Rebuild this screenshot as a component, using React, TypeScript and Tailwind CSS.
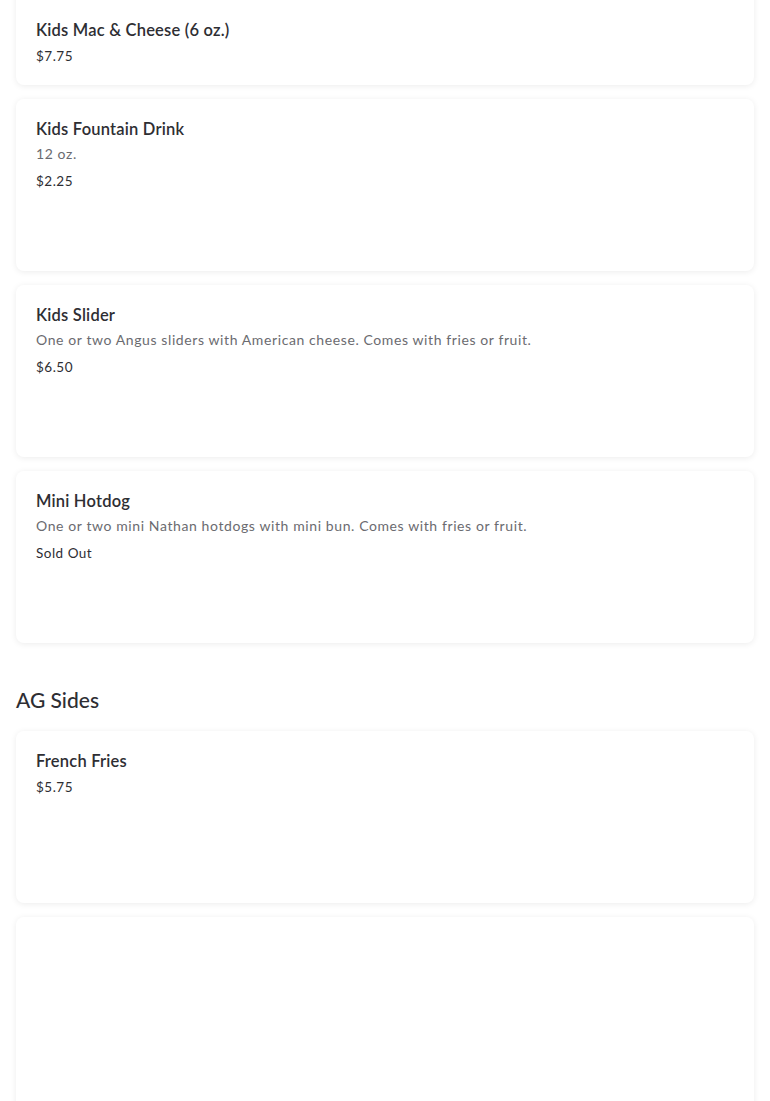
import React from 'react';

interface MenuItem {
    name: string;
    description?: string;
    price: string;
}

const kids: MenuItem[] = [
    { name: 'Kids Mac & Cheese (6 oz.)', price: '$7.75' },
    { name: 'Kids Fountain Drink', description: '12 oz.', price: '$2.25' },
    { name: 'Kids Slider', description: 'One or two Angus sliders with American cheese. Comes with fries or fruit.', price: '$6.50' },
    { name: 'Mini Hotdog', description: 'One or two mini Nathan hotdogs with mini bun. Comes with fries or fruit.', price: 'Sold Out' },
];

const sides: MenuItem[] = [
    { name: 'French Fries', price: '$5.75' },
];

const ItemCard: React.FC<{ item: MenuItem; className?: string }> = ({ item, className = 'min-h-[172px] pt-[18px]' }) => (
    <div className={`bg-white rounded-lg shadow-[0_1px_6px_rgba(0,0,0,0.08)] px-5 ${className}`}>
        <h3 className="text-[16.5px] leading-6 font-semibold text-[#2e2e33] tracking-[0.2px]">{item.name}</h3>
        {item.description && (
            <p className="text-[14px] leading-5 mt-[3px] text-[#6b6b70] tracking-[0.6px]">{item.description}</p>
        )}
        <p className={`text-[13.5px] leading-5 text-[#2e2e33] tracking-[0.5px] ${item.description ? 'mt-[7px]' : 'mt-[4px]'}`}>
            {item.price}
        </p>
    </div>
);

export default function App() {
    return (
        <div className="min-h-screen bg-white overflow-hidden px-4 font-['Lato',_'Liberation_Sans',_sans-serif]">
            <div className="flex flex-col gap-[14px]">
                {kids.map((item, i) => (
                    <ItemCard
                        key={item.name}
                        item={item}
                        className={i === 0 ? 'h-[104px] -mt-[19px] pt-[37px]' : 'min-h-[172px] pt-[18px]'}
                    />
                ))}
            </div>

            <h2 className="mt-[41px] mb-[15px] text-[21px] leading-8 font-medium text-[#2e2e33]">AG Sides</h2>

            <div className="flex flex-col gap-[14px]">
                {sides.map(item => (
                    <ItemCard key={item.name} item={item} />
                ))}
                <div className="bg-white rounded-lg shadow-[0_1px_6px_rgba(0,0,0,0.08)] min-h-[260px]" />
            </div>
        </div>
    );
}
